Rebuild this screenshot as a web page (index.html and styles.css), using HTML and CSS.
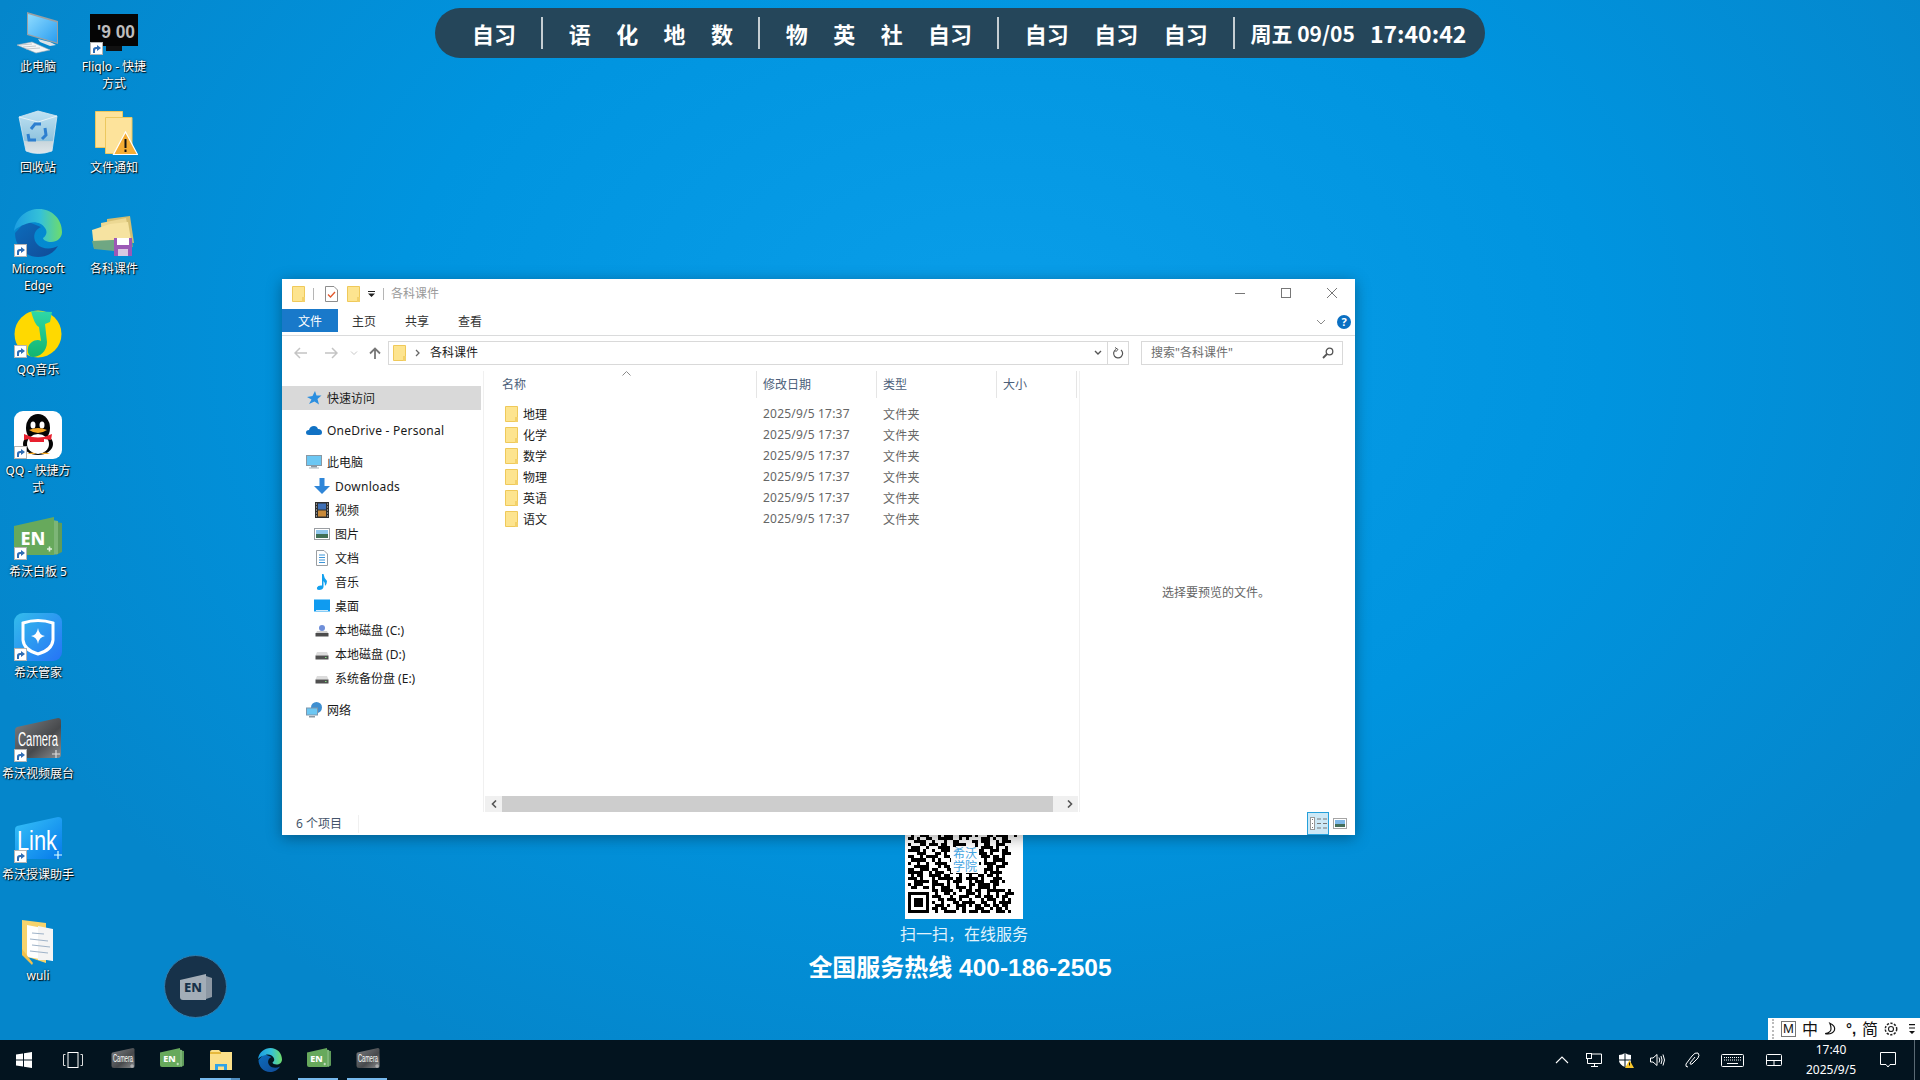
FILE: index.html
```html
<!DOCTYPE html>
<html lang="zh-CN">
<head>
<meta charset="utf-8">
<title>桌面</title>
<link rel="stylesheet" href="styles.css">
</head>
<body>
<svg class="defs" aria-hidden="true">
  <defs>
    <linearGradient id="gEdgeTop" x1="0" y1="0.5" x2="1" y2="0.5"><stop offset="0" stop-color="#1b9de2"/><stop offset=".55" stop-color="#35c1d8"/><stop offset="1" stop-color="#6fdc6a"/></linearGradient>
    <linearGradient id="gEdgeBot" x1="0" y1="0" x2="1" y2="1"><stop offset="0" stop-color="#0c6dbd"/><stop offset="1" stop-color="#114a96"/></linearGradient>
    <linearGradient id="gShield" x1="0" y1="0" x2="1" y2="1"><stop offset="0" stop-color="#33bdec"/><stop offset="1" stop-color="#2673f6"/></linearGradient>
    <linearGradient id="gCam" x1="0" y1="0" x2="1" y2="1"><stop offset="0" stop-color="#7d8083"/><stop offset=".6" stop-color="#47494c"/><stop offset="1" stop-color="#8c8e90"/></linearGradient>
    <linearGradient id="gLink" x1="0" y1="0" x2="1" y2="1"><stop offset="0" stop-color="#37c3f8"/><stop offset="1" stop-color="#0579ea"/></linearGradient>
    <linearGradient id="gNote" x1="0" y1="0" x2="0" y2="1"><stop offset="0" stop-color="#2fd8a8"/><stop offset="1" stop-color="#12b56f"/></linearGradient>
    <linearGradient id="gScreen" x1="0" y1="0" x2="1" y2="1"><stop offset="0" stop-color="#8fdcff"/><stop offset="1" stop-color="#2a9df0"/></linearGradient>
    <linearGradient id="gBin" x1="0" y1="0" x2="0" y2="1"><stop offset="0" stop-color="#bfe2f3"/><stop offset=".7" stop-color="#8fc3de"/><stop offset=".72" stop-color="#c9d6dc"/><stop offset="1" stop-color="#dfe6ea"/></linearGradient>

    <symbol id="arrow" viewBox="0 0 13 13"><rect x=".5" y=".5" width="12" height="12" fill="#fff" stroke="#b4b4b4"/><path d="M3 11V7.5Q3 5 6 5H7V3L11 6 7 9V7H6Q5 7 5 9V11Z" fill="#2f6db5"/></symbol>
    <symbol id="folder" viewBox="0 0 13 16"><path d="M.5.5H12.5V15.5H.5Z" fill="#fde48f" stroke="#efc95a"/><path d="M10 11H13V16H10Z" fill="#f3d16a"/></symbol>

    <symbol id="pc" viewBox="0 0 48 48"><path d="M13 0 44 9V32L13 23Z" fill="#9a9fa3"/><path d="M14 2 43 10.500V30.500L14 22Z" fill="url(#gScreen)"/><path d="M24 27 36 30 42 33 36 34 26 30Z" fill="#dfe3e6"/><path d="M3 33 18 30 36 38 22 41Z" fill="#f4f6f7" stroke="#a9afb4" stroke-width=".6"/><path d="M6 33 18 32M9 35 22 34M12 37 26 36" stroke="#b6bcc0" stroke-width=".8"/></symbol>
    <symbol id="fliqlo" viewBox="0 0 48 48"><rect width="48" height="32" fill="#050505"/><rect x="16" y="32" width="16" height="3" fill="#111"/><rect x="16" y="35" width="16" height="2" fill="#111"/><text x="26" y="24" class="svg-flip" text-anchor="middle" textLength="38" lengthAdjust="spacingAndGlyphs">'9 00</text></symbol>
    <symbol id="bin" viewBox="0 0 48 48"><path d="M5 7 24 1 43 6 38 41Q24 46 12 41Z" fill="url(#gBin)" stroke="#d9e9f1" stroke-width=".8"/><path d="M5 7 24 12 43 6" fill="none" stroke="#e6f2f8"/><g fill="none" stroke="#2d7fd0" stroke-width="3"><path d="M17 19 21 14H27"/><path d="M31 18 32 25 28 29"/><path d="M14 24 15 30 22 30"/></g></symbol>
    <symbol id="notice" viewBox="0 0 48 48"><path d="M5.500 3.500H32.500V39.500H5.500Z" fill="#fde39b" stroke="#ecc85f"/><path d="M15.500 9.500H42V45.500H15.500Z" fill="#fde39b" stroke="#ecc85f"/><path d="M35.500 24 47.500 46.500H23.500Z" fill="#f6ae35" stroke="#fff" stroke-width="1.200"/><path d="M34.500 31H36.500V40H34.500ZM34.500 41.500H36.500V44H34.500Z" fill="#111"/></symbol>
    <symbol id="edge" viewBox="0 0 48 48"><path d="M1 24C1 37 11 48 24 48C32 48 39 45 44 37C37 41 27 40 23 35C18 29 20 21 27 18L12 12Z" fill="url(#gEdgeBot)"/><path d="M0 22C2 8 13 0 25 0C38 0 48 10 48 23C48 29 43 33 37 33C33 33 29 31 29 29C32 27 34 23 31 19C28 14 21 12 15 14C8 16 2 19 0 22Z" fill="url(#gEdgeTop)"/></symbol>
    <symbol id="course" viewBox="0 0 48 48"><path d="M17 6 40 3 44 30 17 28Z" fill="#d3be72"/><path d="M11 10 36 5 41 32 12 32Z" fill="#ecd893"/><path d="M2 17 20 11 38 9 42 33 4 35Z" fill="#f6e3a1"/><path d="M2 28 42 26 43 34 24 38 4 36Z" fill="#6fa783"/><rect x="24" y="25" width="18" height="18" fill="#9b59b6"/><rect x="27" y="25" width="12" height="7" fill="#fff"/><rect x="28" y="36" width="10" height="7" fill="#d9c9e2"/></symbol>
    <symbol id="qqm" viewBox="0 0 48 48"><circle cx="24" cy="24" r="23.500" fill="#ffd900"/><path d="M17 1 L38 2 36 12 31 14 33 32C33 42 25 47 19 47C16 47 13 44 14 38C15 32 23 28 27 31L25 17C22 16 19 9 17 1Z" fill="url(#gNote)"/></symbol>
    <symbol id="qq" viewBox="0 0 48 48"><rect width="48" height="48" rx="9" fill="#fff"/><ellipse cx="24" cy="17" rx="12" ry="14" fill="#050505"/><ellipse cx="24" cy="33" rx="15" ry="11" fill="#050505"/><ellipse cx="24" cy="33" rx="11" ry="10" fill="#fff"/><ellipse cx="19" cy="14" rx="2.500" ry="3.500" fill="#fff"/><ellipse cx="28" cy="14" rx="2.500" ry="3.500" fill="#fff"/><path d="M15 19Q24 15 33 19Q24 25 15 19Z" fill="#f5a623"/><path d="M10 23Q24 30 38 23L37 29 30 28V31H16L15 28 10 29Z" fill="#e8202e"/><path d="M13 43Q19 40 22 43ZM26 43Q31 40 36 43Z" fill="#f5a623"/></symbol>
    <symbol id="en" viewBox="0 0 48 48"><path d="M42 5 48 6V35L42 38Z" fill="#5f9c5a"/><path d="M38 3 44 4V37L38 38Z" fill="#7db577"/><path d="M0 9 40 0V38H4Q0 38 0 34Z" fill="#67a95c"/><text x="19" y="28" class="svg-en" text-anchor="middle">EN</text><path d="M33 32H38M35.500 29.500V34.500" stroke="#dfeeda" stroke-width="1.600"/></symbol>
    <symbol id="guard" viewBox="0 0 48 48"><rect width="48" height="48" rx="9" fill="url(#gShield)"/><path d="M9 10Q24 5 39 10V27Q38 37 24 41Q10 37 9 27Z" fill="none" stroke="#fff" stroke-width="3"/><path d="M24 15Q25 22 31 23Q25 24 24 31Q23 24 17 23Q23 22 24 15Z" fill="#fff"/></symbol>
    <symbol id="cam" viewBox="0 0 48 48"><path d="M3 9 44 0Q47 0 47 3V36Q47 40 44 40H6Q1 40 1 36V12Q1 10 3 9Z" fill="url(#gCam)"/><text x="24" y="28" class="svg-cam" text-anchor="middle" textLength="40" lengthAdjust="spacingAndGlyphs">Camera</text><path d="M38 36H46M42 32V40" stroke="#ddd" stroke-width="1.200"/></symbol>
    <symbol id="link" viewBox="0 0 48 48"><path d="M3 9 44 0Q48 0 48 3V38Q48 42 44 42H6Q1 42 1 38V12Q1 10 3 9Z" fill="url(#gLink)"/><text x="23" y="33" class="svg-link" text-anchor="middle" textLength="40" lengthAdjust="spacingAndGlyphs">Link</text><path d="M40 38H48M44 34V42" stroke="#dff" stroke-width="1.200"/></symbol>
    <symbol id="wuli" viewBox="0 0 48 48"><path d="M8 1 32 4V44L8 36Z" fill="#f6d36d"/><path d="M13 6 39 11V42L13 38Z" fill="#fff"/><path d="M24 7 39 10V41H24Z" fill="#f4f4f4"/><path d="M18 14 30 15M16 20 34 22M18 26 36 28M16 32 34 34" stroke="#9fb3c8" stroke-width="1.200"/><path d="M8 36 18 46 19 44 8 30Z" fill="#f2c04c"/></symbol>
    <symbol id="enlogo" viewBox="0 0 32 26"><path d="M26 2 29 3V24L26 25ZM29 3 32 4V23L29 24Z" fill="#8c97a3"/><path d="M0 6 26 0V26H3Q0 26 0 23Z" fill="#a3adb7"/><text x="13" y="18" class="svg-enlogo" text-anchor="middle">EN</text></symbol>
    <symbol id="explorer" viewBox="0 0 22 20"><path d="M0 2Q0 0 2 0H9L11 2H22V20H0Z" fill="#fbe08a"/><path d="M0 2H11V4H0Z" fill="#e6b93d"/><path d="M5 20V14H17V20H14V16.500H8V20Z" fill="#2fa3e8"/></symbol>

    <symbol id="star" viewBox="0 0 16 16"><path d="M9 1 10.500 5.500 15.500 5.500 11.500 9 13 14.500 8.500 11.500 3 14 5.500 9.500 1 7 6.500 6Z" fill="#2b8fe0"/></symbol>
    <symbol id="cloud" viewBox="0 0 16 16"><path d="M3 13Q0 13 0 10.500Q0 8 3 8Q4 4 8 4Q11 4 12 7Q16 7 16 10.500Q16 13 13 13Z" fill="#1172c4"/></symbol>
    <symbol id="monitor" viewBox="0 0 16 16"><rect x=".5" y="1.500" width="15" height="10" fill="#6cc7f3" stroke="#8a98a3"/><rect x="5" y="12" width="6" height="1.500" fill="#8a98a3"/><rect x="3" y="13.500" width="10" height="1" fill="#a9b3ba"/></symbol>
    <symbol id="dl" viewBox="0 0 16 16"><path d="M5.500 0H10.500V8H16L8 16 0 8H5.500Z" fill="#2f86d8"/></symbol>
    <symbol id="film" viewBox="0 0 16 16"><rect x="1" y="0" width="14" height="16" fill="#2f2f2f"/><rect x="4" y="1.500" width="8" height="6" fill="#3e6fb5"/><rect x="4" y="8.500" width="8" height="6" fill="#c98a3a"/><path d="M2 2H3M2 5H3M2 8H3M2 11H3M2 14H3M13 2H14M13 5H14M13 8H14M13 11H14M13 14H14" stroke="#ddd"/></symbol>
    <symbol id="pic" viewBox="0 0 16 16"><rect x=".5" y="2.500" width="15" height="11" fill="#fff" stroke="#9a9ea2"/><rect x="2" y="4" width="12" height="4" fill="#8ec6ec"/><rect x="2" y="8" width="12" height="4" fill="#3f6f56"/></symbol>
    <symbol id="doc" viewBox="0 0 16 16"><path d="M2.500.5H10L13.500 4V15.500H2.500Z" fill="#fff" stroke="#9a9ea2"/><path d="M5 5H11M5 7.500H11M5 10H11M5 12.500H11" stroke="#3c95d8"/></symbol>
    <symbol id="music" viewBox="0 0 16 16"><path d="M8 0H9.500Q10 4 13 7Q13 10 11 12Q11.500 9 9.500 7V13Q9 16 5 16Q2.500 16 3 13.500Q4 11 8 11.500Z" fill="#12a0ee"/></symbol>
    <symbol id="dsk" viewBox="0 0 16 16"><rect y="1.500" width="16" height="12" fill="#0f9bf0"/><path d="M2 12.500H14" stroke="#cfeafb"/></symbol>
    <symbol id="diskc" viewBox="0 0 16 16"><circle cx="8" cy="6" r="3" fill="#6f8fd9"/><path d="M3 9H13L14 11H2Z" fill="#d0d0d0"/><rect x="1.500" y="11" width="13" height="3.500" fill="#4c4c4c"/></symbol>
    <symbol id="disk" viewBox="0 0 16 16"><path d="M3 6H13L14.500 9.500H1.500Z" fill="#dcdcdc"/><rect x="1.500" y="9.500" width="13" height="4" fill="#505050"/><rect x="11" y="11" width="1.500" height="1" fill="#7fe07f"/></symbol>
    <symbol id="net" viewBox="0 0 16 16"><circle cx="10.500" cy="5.500" r="5.500" fill="#3f8fd0"/><rect x=".5" y="6" width="11" height="7" fill="#6cc7f3" stroke="#7d97ad"/><rect x="3" y="14" width="6" height="1.500" fill="#8a98a3"/></symbol>
  </defs>
</svg>

<main class="desktop">
  <section class="icons">
    <div class="d-item"><svg class="d-ico"><use href="#pc" y="5"/></svg><span class="d-label">此电脑</span></div>
    <div class="d-item"><svg class="d-ico"><use href="#bin" y="2"/></svg><span class="d-label">回收站</span></div>
    <div class="d-item"><svg class="d-ico"><use href="#edge"/><use href="#arrow" y="35" width="13" height="13"/></svg><span class="d-label">Microsoft Edge</span></div>
    <div class="d-item"><svg class="d-ico"><use href="#qqm"/><use href="#arrow" y="35" width="13" height="13"/></svg><span class="d-label">QQ音乐</span></div>
    <div class="d-item"><svg class="d-ico"><use href="#qq"/><use href="#arrow" y="35" width="13" height="13"/></svg><span class="d-label">QQ - 快捷方式</span></div>
    <div class="d-item"><svg class="d-ico"><use href="#en" y="5"/><use href="#arrow" y="35" width="13" height="13"/></svg><span class="d-label">希沃白板 5</span></div>
    <div class="d-item"><svg class="d-ico"><use href="#guard"/><use href="#arrow" y="35" width="13" height="13"/></svg><span class="d-label">希沃管家</span></div>
    <div class="d-item"><svg class="d-ico"><use href="#cam" y="4"/><use href="#arrow" y="35" width="13" height="13"/></svg><span class="d-label">希沃视频展台</span></div>
    <div class="d-item"><svg class="d-ico"><use href="#link" y="2"/><use href="#arrow" y="35" width="13" height="13"/></svg><span class="d-label">希沃授课助手</span></div>
    <div class="d-item"><svg class="d-ico"><use href="#wuli" y="3"/></svg><span class="d-label">wuli</span></div>
    <div class="d-item"><svg class="d-ico"><use href="#fliqlo" y="7"/><use href="#arrow" y="35" width="13" height="13"/></svg><span class="d-label">Fliqlo - 快捷方式</span></div>
    <div class="d-item"><svg class="d-ico"><use href="#notice"/></svg><span class="d-label">文件通知</span></div>
    <div class="d-item"><svg class="d-ico"><use href="#course" y="4"/></svg><span class="d-label">各科课件</span></div>
  </section>

  <header class="schedule">
    <span>自习</span><i class="sch-sep"></i>
    <span>语</span><span>化</span><span>地</span><span>数</span><i class="sch-sep"></i>
    <span>物</span><span>英</span><span>社</span><span>自习</span><i class="sch-sep"></i>
    <span>自习</span><span>自习</span><span>自习</span><i class="sch-sep"></i>
    <div class="sch-time"><span class="sch-date">周五 09/05</span><span class="sch-clock">17:40:42</span></div>
  </header>

  <section class="promo">
    <div class="qr">
      <svg class="qr-svg" viewBox="0 0 39 39" shape-rendering="crispEdges">
        <rect width="39" height="39" fill="#fff"/>
        <path stroke="#000" stroke-width="1" fill="none" d="
M1 10.500h3m2 0h1m1 0h4m3 0h2m1 0h1m2 0h3m1 0h2m2 0h1m1 0h3m2 0h2
M2 11.500h1m2 0h3m3 0h1m1 0h3m2 0h4m1 0h1m3 0h2m1 0h4m2 0h1
M1 12.500h2m1 0h1m2 0h2m2 0h5m2 0h1m1 0h1m4 0h3m1 0h1m2 0h2
M3 13.500h4m2 0h1m3 0h1m2 0h2m4 0h2m1 0h3m2 0h1m1 0h3
M1 14.500h1m3 0h2m1 0h3m1 0h2m2 0h4m3 0h1m2 0h2m2 0h3
M2 15.500h3m2 0h1m3 0h4m1 0h1m6 0h1m1 0h4m1 0h1m2 0h1
M1 16.500h4m1 0h1m2 0h1m2 0h3m1 0h2m6 0h2m2 0h3m1 0h2
M4 17.500h3m3 0h2m1 0h1m2 0h1m7 0h3m1 0h1m3 0h3
M1 18.500h2m2 0h1m1 0h4m2 0h2m8 0h1m1 0h3m1 0h2m1 0h1
M2 19.500h5m2 0h1m1 0h1m3 0h1m7 0h1m2 0h1m2 0h4
M1 20.500h1m2 0h1m2 0h1m2 0h4m2 0h1m6 0h2m1 0h4m2 0h2
M3 21.500h5m3 0h1m1 0h2m1 0h1m2 0h3m1 0h1m3 0h2m1 0h3
M1 22.500h2m2 0h3m1 0h2m3 0h4m2 0h1m1 0h2m2 0h3m1 0h1
M1 23.500h5m2 0h1m1 0h3m2 0h1m1 0h2m1 0h4m2 0h1m1 0h4
M2 24.500h1m1 0h2m2 0h4m1 0h2m3 0h1m2 0h1m2 0h2m1 0h2m1 0h1
M1 25.500h3m1 0h1m3 0h1m1 0h5m1 0h2m1 0h4m1 0h1m3 0h3
M3 26.500h5m1 0h2m3 0h1m1 0h3m2 0h1m1 0h3m2 0h3m1 0h1
M1 27.500h1m1 0h3m3 0h4m1 0h1m2 0h1m3 0h2m1 0h4m1 0h2
M2 28.500h2m2 0h2m1 0h1m2 0h3m2 0h3m1 0h1m2 0h4m1 0h1
M9 29.500h2m1 0h4m2 0h1m1 0h2m1 0h2m2 0h6m1 0h1
M10 30.500h1m2 0h2m1 0h1m3 0h3m1 0h1m2 0h1m2 0h1m2 0h3
M9 31.500h3m3 0h1m2 0h3m2 0h2m1 0h3m1 0h1m1 0h2
M11 32.500h2m1 0h3m1 0h1m2 0h1m3 0h1m1 0h3m2 0h1m1 0h1
M9 33.500h1m2 0h1m3 0h2m1 0h4m2 0h2m2 0h1m1 0h4
M10 34.500h3m1 0h1m2 0h3m1 0h1m1 0h2m1 0h2m1 0h2m1 0h2
M9 35.500h2m1 0h2m3 0h1m1 0h1m3 0h3m2 0h1m1 0h2m1 0h1
M10 36.500h1m2 0h4m2 0h1m1 0h3m1 0h3m2 0h3m1 0h1
"/>
        <path fill="#000" d="M1 30H8V37H1ZM2 31V36H7V31Z" fill-rule="evenodd"/>
        <rect x="3" y="32" width="3" height="3" fill="#000"/>
      </svg>
      <div class="qr-logo">希沃<br>学院</div>
    </div>
    <p class="promo-scan">扫一扫，在线服务</p>
    <p class="promo-phone">全国服务热线 <span class="promo-num">400-186-2505</span></p>
  </section>

  <button class="float-en"><svg class="float-en-ico"><use href="#enlogo"/></svg></button>

  <article class="window">
    <div class="title-bar">
      <svg class="i-folder"><use href="#folder"/></svg>
      <i class="tb-sep"></i>
      <svg class="i-check" viewBox="0 0 13 16"><path d="M.5.5H9L12.500 4V15.500H.5Z" fill="#fff" stroke="#8d8d8d"/><path d="M3 8.500 5.500 11 10 6" fill="none" stroke="#e2572b" stroke-width="1.300"/></svg>
      <svg class="i-folder i-folder-2"><use href="#folder"/></svg>
      <svg class="i-qat" viewBox="0 0 7 6"><path d="M0 0H7V1H0ZM0 2.500H7L3.500 6Z" fill="#222"/></svg>
      <i class="tb-sep tb-sep-2"></i>
      <span class="win-title">各科课件</span>
      <div class="win-ctrls">
        <svg class="ctrl" viewBox="0 0 46 12"><path d="M18 5.500H28" stroke="#777"/></svg>
        <svg class="ctrl" viewBox="0 0 46 12"><rect x="18.500" y=".5" width="9" height="9" fill="none" stroke="#777"/></svg>
        <svg class="ctrl" viewBox="0 0 46 12"><path d="M18 0 28 10M28 0 18 10" stroke="#777" fill="none"/></svg>
      </div>
    </div>
    <div class="ribbon">
      <span class="tab tab-file">文件</span>
      <span class="tab tab-home">主页</span>
      <span class="tab tab-share">共享</span>
      <span class="tab tab-view">查看</span>
      <svg class="rib-chev" viewBox="0 0 10 6"><path d="M1 1 5 5 9 1" fill="none" stroke="#8a8a8a"/></svg>
      <span class="help">?</span>
    </div>
    <div class="nav-row">
      <svg class="nb nb-back" viewBox="0 0 14 12"><path d="M6 1 1 6 6 11M1 6H13" fill="none" stroke="#c4c4c4" stroke-width="1.500"/></svg>
      <svg class="nb nb-fwd" viewBox="0 0 14 12"><path d="M8 1 13 6 8 11M1 6H13" fill="none" stroke="#c4c4c4" stroke-width="1.500"/></svg>
      <svg class="nb nb-drop" viewBox="0 0 8 6"><path d="M1 1.500 4 4.500 7 1.500" fill="none" stroke="#c8c8c8"/></svg>
      <svg class="nb nb-up" viewBox="0 0 12 12"><path d="M6 12V1.500M1 6.500 6 1.500 11 6.500" fill="none" stroke="#777" stroke-width="1.800"/></svg>
      <div class="address">
        <svg class="i-folder i-addr"><use href="#folder"/></svg>
        <svg class="addr-chev" viewBox="0 0 5 8"><path d="M1 1 4 4 1 7" fill="none" stroke="#666" stroke-width="1.300"/></svg>
        <span class="addr-text">各科课件</span>
        <svg class="addr-drop" viewBox="0 0 8 6"><path d="M1 1 4 4 7 1" fill="none" stroke="#555" stroke-width="1.400"/></svg>
        <span class="addr-refresh"><svg class="addr-ref-ico" viewBox="0 0 12 12"><path d="M9 3A4.500 4.500 0 1 1 4 2.500" fill="none" stroke="#555" stroke-width="1.200"/><path d="M3 .5 6 2.500 3.500 5" fill="none" stroke="#555"/></svg></span>
      </div>
      <div class="search"><span class="search-text">搜索"各科课件"</span><svg class="search-ico" viewBox="0 0 12 12"><circle cx="7.500" cy="4.500" r="3.300" fill="none" stroke="#555" stroke-width="1.300"/><path d="M5 7 1 11" stroke="#555" stroke-width="1.800"/></svg></div>
    </div>
    <div class="body">
      <nav class="nav-pane">
        <div class="nav-group"><div class="nav-item nav-top nav-sel"><svg class="i16"><use href="#star"/></svg>快速访问</div></div>
        <div class="nav-group"><div class="nav-item nav-top"><svg class="i16"><use href="#cloud"/></svg><span class="latin">OneDrive - Personal</span></div></div>
        <div class="nav-group">
          <div class="nav-item nav-top"><svg class="i16"><use href="#monitor"/></svg>此电脑</div>
          <div class="nav-item"><svg class="i16"><use href="#dl"/></svg><span class="latin">Downloads</span></div>
          <div class="nav-item"><svg class="i16"><use href="#film"/></svg>视频</div>
          <div class="nav-item"><svg class="i16"><use href="#pic"/></svg>图片</div>
          <div class="nav-item"><svg class="i16"><use href="#doc"/></svg>文档</div>
          <div class="nav-item"><svg class="i16"><use href="#music"/></svg>音乐</div>
          <div class="nav-item"><svg class="i16"><use href="#dsk"/></svg>桌面</div>
          <div class="nav-item"><svg class="i16"><use href="#diskc"/></svg>本地磁盘 (C:)</div>
          <div class="nav-item"><svg class="i16"><use href="#disk"/></svg>本地磁盘 (D:)</div>
          <div class="nav-item"><svg class="i16"><use href="#disk"/></svg>系统备份盘 (E:)</div>
        </div>
        <div class="nav-group"><div class="nav-item nav-top"><svg class="i16"><use href="#net"/></svg>网络</div></div>
      </nav>
      <section class="files">
        <div class="f-head">
          <span class="h-cell h-name">名称<svg class="sort" viewBox="0 0 9 5"><path d="M.5 4.500 4.500.5 8.500 4.500" fill="none" stroke="#8a8a8a"/></svg></span>
          <span class="h-cell">修改日期</span>
          <span class="h-cell">类型</span>
          <span class="h-cell">大小</span>
        </div>
        <div class="f-list">
          <div class="f-row"><span class="f-name"><svg class="i-folder"><use href="#folder"/></svg>地理</span><span class="f-meta">2025/9/5 17:37</span><span class="f-meta">文件夹</span></div>
          <div class="f-row"><span class="f-name"><svg class="i-folder"><use href="#folder"/></svg>化学</span><span class="f-meta">2025/9/5 17:37</span><span class="f-meta">文件夹</span></div>
          <div class="f-row"><span class="f-name"><svg class="i-folder"><use href="#folder"/></svg>数学</span><span class="f-meta">2025/9/5 17:37</span><span class="f-meta">文件夹</span></div>
          <div class="f-row"><span class="f-name"><svg class="i-folder"><use href="#folder"/></svg>物理</span><span class="f-meta">2025/9/5 17:37</span><span class="f-meta">文件夹</span></div>
          <div class="f-row"><span class="f-name"><svg class="i-folder"><use href="#folder"/></svg>英语</span><span class="f-meta">2025/9/5 17:37</span><span class="f-meta">文件夹</span></div>
          <div class="f-row"><span class="f-name"><svg class="i-folder"><use href="#folder"/></svg>语文</span><span class="f-meta">2025/9/5 17:37</span><span class="f-meta">文件夹</span></div>
        </div>
        <div class="hscroll">
          <span class="sb-btn"><svg class="sb-arrow" viewBox="0 0 6 8"><path d="M5 .5 1.500 4 5 7.500" fill="none" stroke="#555" stroke-width="1.600"/></svg></span>
          <span class="sb-thumb"></span>
          <span class="sb-btn"><svg class="sb-arrow" viewBox="0 0 6 8"><path d="M1 .5 4.500 4 1 7.500" fill="none" stroke="#555" stroke-width="1.600"/></svg></span>
        </div>
      </section>
      <aside class="preview">选择要预览的文件。</aside>
    </div>
    <footer class="status">
      <span class="st-count">6 个项目</span>
      <div class="st-views">
        <span class="st-btn st-on"><svg class="st-ico" viewBox="0 0 17 13"><rect x=".5" y=".5" width="4" height="12" fill="#fff" stroke="#999"/><path d="M7 2H11M13 2H17M7 6.500H11M13 6.500H17M7 11H11M13 11H17M2 2.500H3M2 6.500H3M2 10.500H3" stroke="#777"/></svg></span>
        <span class="st-btn st-btn-2"><svg class="st-ico-2" viewBox="0 0 14 11"><rect x=".5" y=".5" width="13" height="10" fill="#fff" stroke="#a5a5a5"/><rect x="2" y="2" width="10" height="4" fill="#7db8e8"/><rect x="2" y="6" width="10" height="3" fill="#456f5c"/></svg></span>
      </div>
    </footer>
  </article>

  <div class="ime">
    <i class="ime-grip"></i>
    <span class="ime-m">M</span>
    <span class="ime-t ime-zh">中</span>
    <svg class="ime-moon" viewBox="0 0 12 12"><path d="M5 1Q10 3 9 7Q7 11 1 10Q6 9 6 6Q6 3 5 1Z" fill="none" stroke="#111"/></svg>
    <span class="ime-punc">°,</span>
    <span class="ime-t ime-jian">简</span>
    <svg class="ime-gear" viewBox="0 0 14 14"><circle cx="7" cy="7" r="2.200" fill="none" stroke="#222"/><circle cx="7" cy="7" r="5" fill="none" stroke="#222" stroke-width="1.300" stroke-dasharray="2 1.200"/></svg>
    <svg class="ime-more" viewBox="0 0 6 12"><path d="M0 1H6V2.300H0ZM0 4.500H6V5.500H0ZM0 8H6L3 11Z" fill="#111"/></svg>
  </div>

  <footer class="taskbar">
    <span class="tb-btn tb-start"><svg class="tb-win" viewBox="0 0 16 16"><path d="M0 2.500 7 1.500V7.500H0ZM8 1.300 16 0V7.500H8ZM0 8.500H7V14.500L0 13.500ZM8 8.500H16V16L8 14.700Z" fill="#fff"/></svg></span>
    <span class="tb-btn tb-view"><svg class="tb-tv" viewBox="0 0 20 16"><rect x="5" y=".5" width="10" height="15" fill="none" stroke="#fff"/><path d="M2.500 2.500H.5V13.500H2.500M17.500 2.500H19.500V13.500H17.500" fill="none" stroke="#ddd"/></svg></span>
    <span class="tb-btn"><svg class="tb-ico"><use href="#cam"/></svg></span>
    <span class="tb-btn"><svg class="tb-ico"><use href="#en"/></svg></span>
    <span class="tb-btn tb-open tb-active"><svg class="tb-exp"><use href="#explorer"/></svg></span>
    <span class="tb-btn"><svg class="tb-ico"><use href="#edge"/></svg></span>
    <span class="tb-btn tb-open"><svg class="tb-ico"><use href="#en"/></svg></span>
    <span class="tb-btn tb-open"><svg class="tb-ico"><use href="#cam"/></svg></span>
    <div class="tray">
      <span class="tr tr-32"><svg class="tr-ico" viewBox="0 0 14 8"><path d="M1 7 7 1 13 7" fill="none" stroke="#fff" stroke-width="1.100"/></svg></span>
      <span class="tr tr-32"><svg class="tr-ico-l" viewBox="0 0 16 14"><path d="M5 1H15.500V10.500H1.500V6" fill="none" stroke="#fff"/><rect x=".5" y=".5" width="5" height="5" fill="none" stroke="#fff"/><path d="M8.500 10.500V13M5 13.500H12" stroke="#fff"/></svg></span>
      <span class="tr tr-32"><svg class="tr-ico-l" viewBox="0 0 16 16"><path d="M7 1Q10 3 13 3V9Q12 13 7 15Q2 13 1 9V3Q4 3 7 1Z" fill="#fff"/><path d="M7 1V15M1 8H13" stroke="#03141f"/><path d="M11.500 8 16 16H7Z" fill="#f7c52b"/><path d="M11.500 10.500V13.500" stroke="#111"/></svg></span>
      <span class="tr tr-31"><svg class="tr-ico-l" viewBox="0 0 16 14"><path d="M.5 5H3L7 1.500V12.500L3 9H.5Z" fill="none" stroke="#fff"/><path d="M9 4.500Q10.500 7 9 9.500M11 3Q13 7 11 11M13 1.500Q16 7 13 12.500" fill="none" stroke="#fff"/></svg></span>
      <span class="tr tr-40"><svg class="tr-ico-l" viewBox="0 0 16 16"><path d="M3 15Q0 15 1 12L7 4Q10 0 13 1Q15 3 13 6L7 12Q5 13 5 11L10 5" fill="none" stroke="#fff"/></svg></span>
      <span class="tr tr-38"><svg class="tr-ico-k" viewBox="0 0 23 13"><rect x=".5" y=".5" width="22" height="12" rx="1" fill="none" stroke="#fff"/><path d="M3 3.500H20M3 6H20" stroke="#fff" stroke-dasharray="1 1"/><path d="M6 9.500H17" stroke="#fff"/></svg></span>
      <span class="tr tr-46"><svg class="tr-ico-l" viewBox="0 0 16 12"><rect x=".5" y=".5" width="15" height="11" rx="1" fill="none" stroke="#fff"/><path d="M.5 6.500H15.500M8 6.500V11.500" stroke="#fff"/></svg></span>
      <div class="clock"><span>17:40</span><span>2025/9/5</span></div>
      <span class="tr tr-46"><svg class="tr-ico-n" viewBox="0 0 16 16"><path d="M.5 .5H15.500V12.500H10L8 15 6 12.500H.5Z" fill="none" stroke="#fff"/></svg></span>
      <i class="show-desk"></i>
    </div>
  </footer>
</main>
</body>
</html>
```
FILE: styles.css
```css
* { box-sizing: border-box; }
html, body { margin: 0; padding: 0; height: 100%; }
body { font-family: "Noto Sans", "Noto Sans CJK SC", sans-serif; font-size: 12px; overflow: hidden; }
svg { display: block; flex: none; }
.defs { position: absolute; width: 0; height: 0; }

.desktop {
  position: relative; width: 1920px; height: 1080px; overflow: hidden;
  background: radial-gradient(ellipse 1100px 800px at 52% 32%, #0a9ee9 0%, #0094df 55%, #0586cb 100%);
}

/* desktop icons */
.icons {
  position: absolute; left: 0; top: 7px;
  display: grid; grid-auto-flow: column;
  grid-template-rows: repeat(10, 101px); grid-auto-columns: 76px;
}
.d-item { display: flex; flex-direction: column; align-items: center; }
.d-ico { width: 48px; height: 48px; overflow: visible; }
.d-label {
  width: 74px; margin-top: 3px; line-height: 17px; text-align: center; color: #fff;
  text-shadow: 1px 1px 1px #000, 0 0 2px rgba(0,0,0,.7);
}
.svg-flip { font: 700 19px "Liberation Sans", sans-serif; fill: #bdbdbd; }
.svg-en { font: 800 18px "Noto Sans", sans-serif; fill: #fff; }
.svg-cam { font: 400 20px "Liberation Sans", sans-serif; fill: #fff; }
.svg-link { font: 400 28px "Liberation Sans", sans-serif; fill: #fff; }
.svg-enlogo { font: 800 13px "Noto Sans", sans-serif; fill: #17324a; }

/* schedule bar */
.schedule {
  position: absolute; left: 435px; top: 8px; width: 1050px; height: 50px;
  padding-left: 37px; border-radius: 25px; background: #25465a; color: #fff;
  display: flex; align-items: center; gap: 25.4px;
  font: 700 22px "Noto Sans CJK SC", sans-serif;
}
.sch-sep { width: 2px; height: 32px; background: #c5ced3; }
.sch-time { display: flex; align-items: center; gap: 15px; margin-left: -10px; }
.sch-date { font-size: 21px; }
.sch-clock { font-size: 23px; }

/* wallpaper promo */
.promo {
  position: absolute; left: 764px; top: 801px; width: 400px;
  display: flex; flex-direction: column; align-items: center;
  color: #fff;
}
.qr { position: relative; width: 118px; height: 118px; }
.qr-svg { width: 118px; height: 118px; }
.qr-logo {
  position: absolute; left: 46px; top: 46px; width: 28px; padding: 0 2px;
  background: #fff; color: #45a5e2; font-size: 12px; line-height: 13px; text-align: center;
}
.promo-scan { margin: 4px 0 0; font-size: 16px; line-height: 22px; color: #e3f3fc; }
.promo-phone {
  margin: 6px 0 0 -8px; font: 700 24px/34px "Liberation Sans", "Noto Sans CJK SC", sans-serif;
}
.promo-num { font-size: 24.5px; }

.float-en {
  position: absolute; left: 164px; top: 955px; width: 63px; height: 63px; padding: 0;
  border-radius: 50%; border: 1px solid #2f7fb0; background: #17324a;
  display: flex; align-items: center; justify-content: center;
}
.float-en-ico { width: 32px; height: 26px; }

/* explorer window */
.window {
  position: absolute; left: 282px; top: 279px; width: 1073px; height: 556px;
  display: flex; flex-direction: column; background: #fff; color: #1a1a1a;
  box-shadow: 0 3px 14px rgba(0,0,0,.35);
}
.title-bar { height: 30px; display: flex; align-items: center; padding-left: 10px; flex: none; }
.i-folder { width: 13px; height: 16px; }
.tb-sep { width: 1px; height: 12px; background: #b5b5b5; margin-left: 8px; }
.i-check { width: 13px; height: 16px; margin-left: 11px; }
.i-folder-2 { margin-left: 9px; }
.i-qat { width: 7px; height: 6px; margin-left: 8px; }
.tb-sep-2 { margin-left: 8px; }
.win-title { margin-left: 7px; color: #9a9a9a; line-height: 16px; }
.win-ctrls { margin-left: auto; display: flex; }
.ctrl { width: 46px; height: 12px; }

.ribbon {
  height: 27px; flex: none; display: flex; align-items: flex-start; padding-right: 4px;
  border-bottom: 1px solid #dadbdc;
}
.tab { height: 23px; line-height: 25px; text-align: center; color: #333; }
.tab-file { width: 56px; background: #1979ca; color: #fff; }
.tab-home { margin-left: 14px; width: 24px; }
.tab-share { margin-left: 29px; width: 24px; }
.tab-view { margin-left: 29px; width: 24px; }
.rib-chev { width: 10px; height: 6px; margin: 10px 0 0 auto; }
.help {
  width: 14px; height: 14px; margin: 6px 0 0 11px; border-radius: 50%; background: #0a6fc2;
  color: #fff; font: 700 11px/14px "Noto Sans", sans-serif; text-align: center;
}

.nav-row { height: 35px; flex: none; display: flex; align-items: flex-start; padding-top: 5px; }
.nb { margin-top: 6px; }
.nb-back { width: 14px; height: 12px; margin-left: 12px; }
.nb-fwd { width: 14px; height: 12px; margin-left: 16px; }
.nb-drop { width: 8px; height: 6px; margin: 9px 0 0 12px; }
.nb-up { width: 12px; height: 12px; margin-left: 11px; }
.address {
  width: 741px; height: 24px; margin-left: 7px; border: 1px solid #d9d9d9;
  display: flex; align-items: center; padding-left: 4px;
}
.i-addr { width: 13px; height: 16px; }
.addr-chev { width: 5px; height: 8px; margin-left: 9px; }
.addr-text { margin-left: 10px; line-height: 16px; }
.addr-drop { width: 8px; height: 6px; margin-left: auto; }
.addr-refresh { width: 21px; height: 22px; margin-left: 5px; border-left: 1px solid #d9d9d9; display: flex; align-items: center; justify-content: center; }
.addr-ref-ico { width: 12px; height: 12px; }
.search {
  width: 202px; height: 24px; margin-left: 12px; border: 1px solid #d9d9d9;
  display: flex; align-items: center; justify-content: space-between; padding: 0 8px 0 9px;
}
.search-text { color: #6d6d6d; line-height: 16px; }
.search-ico { width: 12px; height: 12px; }

.body { flex: 1; display: flex; min-height: 0; }
.nav-pane {
  width: 202px; flex: none; padding: 15px 2px 0 0; border-right: 1px solid #f0f0f0;
  display: flex; flex-direction: column; gap: 8px;
}
.nav-item { height: 24px; display: flex; align-items: center; gap: 5px; padding-left: 32px; }
.nav-top { padding-left: 24px; }
.nav-sel { background: #d9d9d9; }
.i16 { width: 16px; height: 16px; }
.latin { letter-spacing: .25px; }

.files { width: 596px; flex: none; display: flex; flex-direction: column; border-right: 1px solid #f0f0f0; }
.f-head, .f-row { display: grid; grid-template-columns: 273px 120px 120px 80px; }
.f-head { height: 27px; flex: none; }
.h-cell { position: relative; padding-left: 6px; line-height: 27px; color: #4c607a; border-right: 1px solid #e5e5e5; }
.h-name { padding-left: 18px; }
.sort { position: absolute; left: 138px; top: 0; width: 9px; height: 5px; }
.f-list { margin-top: 5px; flex: 1; }
.f-row { height: 21px; align-items: center; }
.f-name { display: flex; align-items: center; gap: 5px; padding-left: 21px; }
.f-meta { padding-left: 6px; color: #666; letter-spacing: .2px; }

.hscroll { height: 16px; flex: none; margin: 0 1px; background: #f0f0f0; display: flex; align-items: center; }
.sb-btn { width: 17px; height: 16px; display: flex; align-items: center; justify-content: center; flex: none; }
.sb-arrow { width: 6px; height: 8px; }
.sb-thumb { flex: 1; height: 16px; background: #cdcdcd; margin-right: 8px; }

.preview { flex: 1; display: flex; align-items: center; justify-content: center; color: #666; padding-right: 3px; }

.status { height: 23px; flex: none; display: flex; align-items: center; justify-content: space-between; padding-left: 14px; padding-right: 8px; }
.st-count { color: #44546a; padding-right: 16px; border-right: 1px solid #f0f0f0; line-height: 18px; }
.st-views { display: flex; align-items: stretch; height: 23px; gap: 4px; }
.st-btn { width: 22px; display: flex; align-items: center; justify-content: center; }
.st-btn-2 { width: 14px; }
.st-on { background: #cce8f6; border: 1px solid #26a0da; }
.st-ico { width: 17px; height: 13px; }
.st-ico-2 { width: 14px; height: 11px; }

/* IME */
.ime {
  position: absolute; right: 0; top: 1018px; width: 152px; height: 22px; background: #fff;
  display: flex; align-items: center; color: #111; padding-left: 4px;
}
.ime-grip { width: 2px; height: 20px; border-left: 2px dotted #bbb; }
.ime-m { width: 15px; height: 16px; margin-left: 7px; border: 1px solid #777; font: 400 13px/14px "Liberation Sans", sans-serif; text-align: center; }
.ime-t { font-size: 16px; line-height: 20px; }
.ime-zh { margin-left: 6px; }
.ime-moon { width: 14px; height: 14px; margin-left: 6px; }
.ime-punc { margin-left: 4px; width: 18px; font: 700 15px/16px "Liberation Sans", sans-serif; text-align: center; }
.ime-jian { margin-left: 2px; }
.ime-gear { width: 16px; height: 16px; margin-left: 5px; }
.ime-more { width: 6px; height: 12px; margin-left: 10px; }

/* taskbar */
.taskbar {
  position: absolute; left: 0; right: 0; bottom: 0; height: 40px; background: #03141f;
  display: flex; align-items: stretch; color: #fff;
}
.tb-btn { position: relative; width: 49px; display: flex; align-items: center; justify-content: center; }
.tb-start { width: 48px; }
.tb-view { width: 50px; }
.tb-win { width: 16px; height: 16px; }
.tb-tv { width: 20px; height: 16px; }
.tb-ico { width: 24px; height: 24px; }
.tb-exp { width: 22px; height: 20px; }
.tb-open::after { content: ""; position: absolute; left: 4px; right: 5px; bottom: 0; height: 2px; background: #76b9ed; }
.tb-active::after { background: linear-gradient(90deg, #76b9ed 0 77%, #4f8dbf 77%); }

.tray { margin-left: auto; display: flex; align-items: center; height: 40px; }
.tr { display: flex; justify-content: center; align-items: center; height: 40px; }
.tr-31 { width: 31px; } .tr-32 { width: 32px; } .tr-38 { width: 38px; } .tr-40 { width: 40px; } .tr-46 { width: 46px; }
.tr-ico { width: 14px; height: 8px; }
.tr-ico-l { width: 16px; height: 16px; }
.tr-ico-k { width: 23px; height: 13px; }
.tr-ico-n { width: 16px; height: 16px; }
.clock { width: 68px; display: flex; flex-direction: column; align-items: center; line-height: 20px; font-size: 12px; }
.show-desk { width: 6px; height: 40px; margin-left: 3px; border-left: 1px solid #5a6a74; }
```
